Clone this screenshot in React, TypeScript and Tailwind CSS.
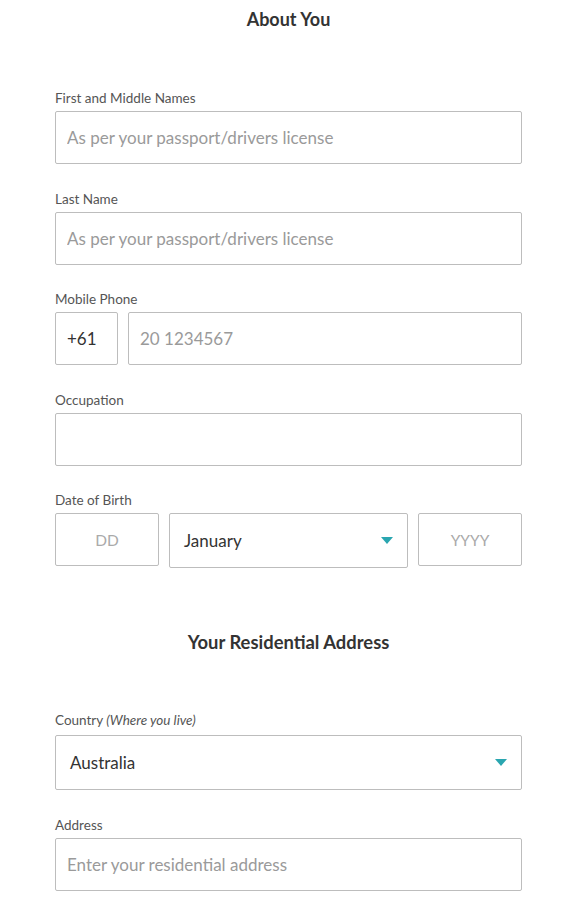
import React from 'react';

const inputCls =
  'block w-full h-[53px] rounded-[2px] border border-[#bdbdbd] bg-white px-[11px] text-[17px] text-[#333] placeholder:text-[#9a9a9a] outline-none';

function Label({ children }: { children: React.ReactNode }) {
  return <div className="h-[16px] text-[13.5px] leading-[16px] text-[#555]">{children}</div>;
}

function Caret() {
  return (
    <svg width="12" height="7" viewBox="0 0 12 7" className="shrink-0">
      <path d="M0 0h12L6 7z" fill="#2aa6b0" />
    </svg>
  );
}

function SelectBox({ value, className }: { value: string; className?: string }) {
  return (
    <div
      className={`flex h-[55px] items-center justify-between rounded-[2px] border border-[#bdbdbd] bg-white pl-[14px] pr-[14px] text-[17px] text-[#333] ${className ?? ''}`}
    >
      <span>{value}</span>
      <Caret />
    </div>
  );
}

function Field({ label, children }: { label: React.ReactNode; children: React.ReactNode }) {
  return (
    <div className="mb-[26.5px]">
      <Label>{label}</Label>
      <div className="mt-[5px]">{children}</div>
    </div>
  );
}

export default function App() {
  return (
    <div className="min-h-[913px] w-[571px] bg-white font-['Lato','Noto_Sans',sans-serif]">
      <div className="ml-[55px] w-[467px] pt-[7px]">
        <h2 className="h-[24px] text-center text-[18px] font-bold leading-[24px] text-[#333]">About You</h2>

        <div className="mt-[59px]">
          <Field label="First and Middle Names">
            <input className={inputCls} placeholder="As per your passport/drivers license" />
          </Field>

          <Field label="Last Name">
            <input className={inputCls} placeholder="As per your passport/drivers license" />
          </Field>

          <Field label="Mobile Phone">
            <div className="flex gap-[10px]">
              <div className="flex h-[53px] w-[63px] items-center rounded-[2px] border border-[#bdbdbd] pl-[11px] text-[17px] text-[#333]">
                +61
              </div>
              <input className={`${inputCls} flex-1`} placeholder="20 1234567" />
            </div>
          </Field>

          <Field label="Occupation">
            <input className={inputCls} />
          </Field>

          <div>
            <Label>Date of Birth</Label>
            <div className="mt-[5px] flex items-start gap-[10px]">
              <input
                className={`${inputCls} !w-[104px] text-center !text-[15.5px] placeholder:text-[#aaa]`}
                placeholder="DD"
              />
              <SelectBox value="January" className="flex-1" />
              <input
                className={`${inputCls} !w-[104px] text-center !text-[15.5px] placeholder:text-[#aaa]`}
                placeholder="YYYY"
              />
            </div>
          </div>
        </div>

        <h2 className="mt-[62px] h-[24px] text-center text-[18.4px] font-bold leading-[24px] text-[#333]">
          Your Residential Address
        </h2>

        <div className="mt-[58px]">
          <div className="mb-[27px]">
            <Label>
              Country <i>(Where you live)</i>
            </Label>
            <div className="mt-[7px]">
              <SelectBox value="Australia" />
            </div>
          </div>

          <Field label="Address">
            <input className={inputCls} placeholder="Enter your residential address" />
          </Field>
        </div>
      </div>
    </div>
  );
}
